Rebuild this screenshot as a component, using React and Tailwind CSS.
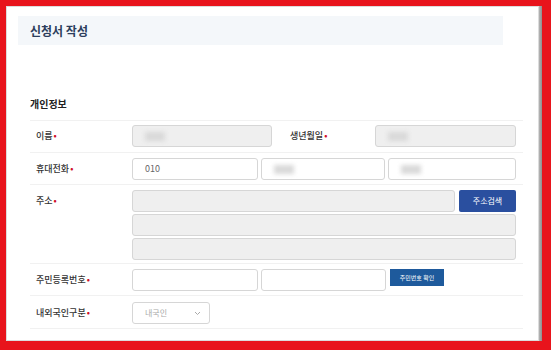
import React from "react";

const font = { fontFamily: '"Noto Sans CJK KR", "Noto Sans", sans-serif' };

function Label({ children }) {
  return (
    <div className="w-[102px] shrink-0 pl-[6px] text-[9px] text-[#333] font-medium leading-[22px]">
      {children}
      <span className="text-[#d0102a] ml-[1px]">•</span>
    </div>
  );
}

function Input({ w, gray, text, blur, className = "" }) {
  return (
    <div
      className={`h-[22px] rounded-[3px] border border-[#d6d6d6] flex items-center pl-[12px] text-[9px] text-[#666] ${gray ? "bg-[#efefef]" : "bg-white"} ${className}`}
      style={{ width: w }}
    >
      {text}
      {blur && <div className="w-[20px] h-[9px] bg-[#d9d9d9] blur-[2px]" />}
    </div>
  );
}

function Row({ children, h, top = 4 }) {
  return (
    <div className="flex border-t border-[#f1f1f1]" style={{ height: h, paddingTop: top }}>
      {children}
    </div>
  );
}

export default function App() {
  return (
    <div className="w-[551px] h-[350px] bg-[#e8141c] pt-[6px] pl-[6px] overflow-hidden" style={font}>
      <div className="flex h-[335px]">
        <div className="w-[533px] h-[335px] bg-white border border-[#dcdcdc] relative">
          <div className="ml-[11px] mt-[9px] w-[485px] h-[29px] bg-[#f4f7fa] flex items-center pl-[12px] text-[12px] font-bold text-[#2c3e5c]">
            신청서 작성
          </div>
          <div className="ml-[23px] mt-[52px] text-[10px] font-semibold text-[#222] leading-[14px]">개인정보</div>
          <div className="ml-[23px] mt-[9px] w-[493px]">
            <Row h={32}>
              <Label>이름</Label>
              <Input w={140} gray blur />
              <div className="w-[103px] pl-[18px] text-[9px] text-[#333] font-medium leading-[22px]">
                생년월일<span className="text-[#d0102a] ml-[1px]">•</span>
              </div>
              <Input w={141} gray blur />
            </Row>
            <Row h={32} top={5}>
              <Label>휴대전화</Label>
              <div className="flex gap-[3px]">
                <Input w={126} text="010" className="bg-[#fafafa]" />
                <Input w={124} blur className="bg-[#fafafa]" />
                <Input w={128} blur className="bg-[#fafafa]" />
              </div>
            </Row>
            <Row h={79} top={5}>
              <Label>주소</Label>
              <div className="flex flex-col gap-[2px]">
                <div className="flex gap-[4px]">
                  <Input w={323} gray />
                  <div className="w-[57px] h-[22px] rounded-[2px] bg-[#2a4f9f] text-white text-[8px] flex items-center justify-center">
                    주소검색
                  </div>
                </div>
                <Input w={384} gray />
                <Input w={384} gray />
              </div>
            </Row>
            <Row h={32} top={5}>
              <Label>주민등록번호</Label>
              <div className="flex gap-[3px]">
                <Input w={126} />
                <Input w={125} />
                <div className="ml-[1px] w-[54px] h-[17px] bg-[#1e5a9c] text-white text-[6px] flex items-center justify-center">
                  주민번호 확인
                </div>
              </div>
            </Row>
            <Row h={33} top={6}>
              <Label>내외국인구분</Label>
              <div className="w-[78px] h-[22px] rounded-[3px] border border-[#d6d6d6] bg-white flex items-center justify-between pl-[12px] pr-[8px] text-[8px] text-[#aaa]">
                <span>내국인</span>
                <svg width="7" height="5" viewBox="0 0 7 5"><path d="M1 1l2.5 2.5L6 1" stroke="#aaa" fill="none" strokeWidth="1" /></svg>
              </div>
            </Row>
            <div className="border-t border-[#f1f1f1]" />
          </div>
        </div>
        <div className="w-[3px] h-[335px] bg-gradient-to-r from-[#b5b5b5] to-[#8e8e8e]" />
      </div>
    </div>
  );
}
